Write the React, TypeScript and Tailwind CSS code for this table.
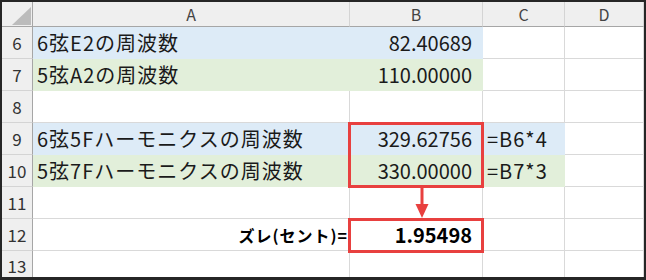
import React from "react";

const FONT = { fontFamily: '"Noto Sans CJK JP", "Noto Sans", sans-serif' };

type Cell = { text?: string; align?: "l" | "r"; fill?: "b" | "g"; bold?: boolean; small?: boolean };

const rows: { n: string; cells: Cell[] }[] = [
  { n: "6", cells: [{ text: "6弦E2の周波数", fill: "b" }, { text: "82.40689", align: "r", fill: "b" }, {}, {}] },
  { n: "7", cells: [{ text: "5弦A2の周波数", fill: "g" }, { text: "110.00000", align: "r", fill: "g" }, {}, {}] },
  { n: "8", cells: [{}, {}, {}, {}] },
  { n: "9", cells: [{ text: "6弦5Fハーモニクスの周波数", fill: "b" }, { text: "329.62756", align: "r", fill: "b" }, { text: "=B6*4", fill: "b" }, {}] },
  { n: "10", cells: [{ text: "5弦7Fハーモニクスの周波数", fill: "g" }, { text: "330.00000", align: "r", fill: "g" }, { text: "=B7*3", fill: "g" }, {}] },
  { n: "11", cells: [{}, {}, {}, {}] },
  { n: "12", cells: [{ text: "ズレ(セント)=", align: "r", bold: true, small: true }, { text: "1.95498", align: "r", bold: true }, {}, {}] },
];

function cellClass(c: Cell) {
  const fill =
    c.fill === "b"
      ? "bg-[#ddebf7] border-transparent"
      : c.fill === "g"
      ? "bg-[#e2efda] border-transparent"
      : "bg-white border-[#d9d9d9]";
  let txt = "";
  if (c.small) txt = "justify-end pr-[1px] text-[16px] font-bold text-black tracking-[1px]";
  else if (c.bold) txt = "justify-end pr-[10px] text-[20px] font-bold text-black";
  else if (c.align === "r") txt = "justify-end pr-[10px] text-[20px] text-[#1a1a1a]";
  else txt = "justify-start pl-[4px] text-[20px] text-[#1a1a1a] tracking-[1px]";
  return `h-[32px] ${fill} border-r border-b flex items-center whitespace-nowrap ${txt}`;
}

export default function App() {
  return (
    <div className="w-[646px] h-[280px] bg-[#262626] pt-[2px] pl-[2px] pr-[2px] pb-[3px]" style={FONT}>
      <div className="relative w-[642px] h-[275px] bg-white overflow-hidden">
        <div className="grid grid-cols-[31px_317px_133px_82px_79px]">
          <div className="h-[25px] bg-[#efefef] border-r border-b border-[#a6a6a6] relative">
            <svg className="absolute left-[10px] top-[5px]" width="19" height="18" viewBox="0 0 19 18">
              <polygon points="0,18 19,18 19,0" fill="#bcbcbc" />
            </svg>
          </div>
          {["A", "B", "C", "D"].map((l) => (
            <div
              key={l}
              className="h-[25px] bg-[#efefef] border-r border-b border-r-[#d4d4d4] border-b-[#a6a6a6] flex items-center justify-center text-[16px] text-[#444]"
            >
              {l}
            </div>
          ))}
          {rows.map((r) => (
            <React.Fragment key={r.n}>
              <div className="h-[32px] bg-[#efefef] border-r border-b border-r-[#a6a6a6] border-b-[#d4d4d4] flex items-center justify-center text-[17px] text-[#333]">
                {r.n}
              </div>
              {r.cells.map((c, i) => (
                <div key={i} className={cellClass(c)}>
                  {c.text}
                </div>
              ))}
            </React.Fragment>
          ))}
          <div className="h-[26px] bg-[#efefef] border-r border-r-[#a6a6a6] flex items-start pt-[2px] justify-center text-[17px] text-[#333]">
            13
          </div>
          {[0, 1, 2, 3].map((i) => (
            <div key={i} className="h-[26px] bg-white border-r border-[#d9d9d9]" />
          ))}
        </div>

        <div className="absolute left-[346px] top-[120px] w-[136px] h-[66px] border-[3px] border-[#e8403f]" />
        <div className="absolute left-[346px] top-[216px] w-[136px] h-[35px] border-[3px] border-[#e8403f]" />
        <svg className="absolute left-[412px] top-[185px]" width="16" height="32" viewBox="0 0 16 32">
          <line x1="8" y1="0" x2="8" y2="20" stroke="#e8403f" strokeWidth="3" />
          <polygon points="1.5,17 14.5,17 8,31" fill="#e8403f" />
        </svg>
      </div>
    </div>
  );
}
